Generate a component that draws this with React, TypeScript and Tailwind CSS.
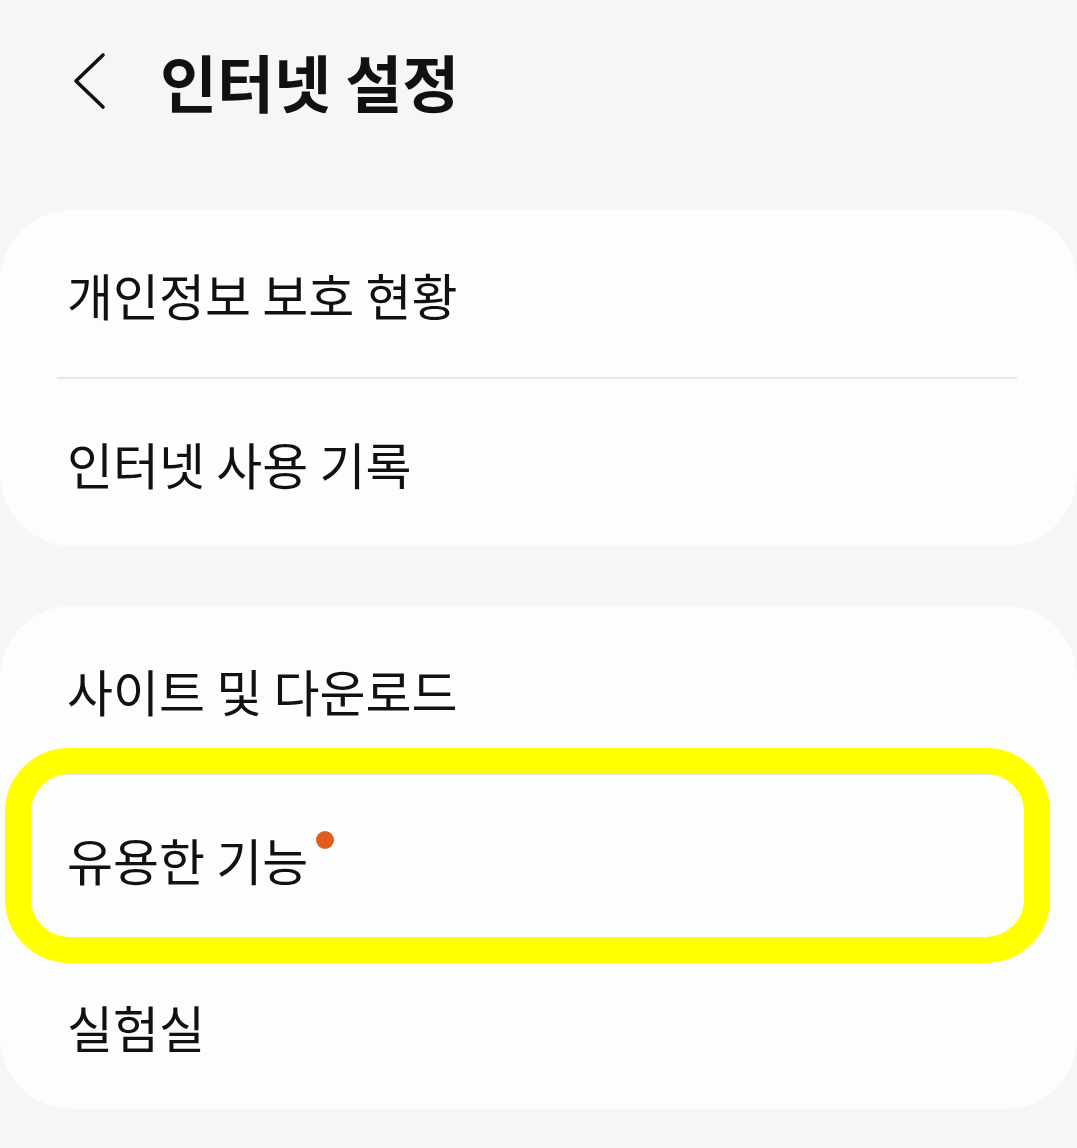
const font = { fontFamily: '"Noto Sans CJK KR", "Noto Sans", sans-serif' };

function Row({ label, dot, highlight }: { label: string; dot?: boolean; highlight?: boolean }) {
  return (
    <div className="relative flex h-[167px] items-center pl-[67px]">
      {highlight && (
        <div className="pointer-events-none absolute -top-[27px] -bottom-[21px] left-[5px] right-[27px] rounded-[64px] border-[26px] border-[#ffff00]" />
      )}
      <span className="relative text-[50px] leading-none text-[#111111]">
        {label}
        {dot && (
          <span className="absolute -right-[26px] -top-[3px] h-[18px] w-[18px] rounded-full bg-[#e25c1d]" />
        )}
      </span>
    </div>
  );
}

function Divider() {
  return <div className="ml-[57px] mr-[60px] h-[2px] bg-[#e6e6e8]" />;
}

export default function App() {
  return (
    <div className="min-h-[1148px] w-full bg-[#f6f6f8]" style={font}>
      <header className="flex h-[210px] items-start pt-[47px]">
        <div className="flex h-[68px] items-center">
          <svg className="ml-[72px] h-[60px] w-[34px]" viewBox="0 0 34 60" fill="none">
            <polyline
              points="31,4 4,30 31,56"
              stroke="#111111"
              strokeWidth="3.6"
              strokeLinecap="round"
              strokeLinejoin="round"
            />
          </svg>
          <h1 className="ml-[54px] text-[62px] font-bold leading-none text-[#111111]">
            인터넷 설정
          </h1>
        </div>
      </header>

      <section className="rounded-[72px] bg-[#fdfdfd]">
        <Row label="개인정보 보호 현황" />
        <Divider />
        <Row label="인터넷 사용 기록" />
      </section>

      <section className="mt-[60px] rounded-[72px] bg-[#fdfdfd]">
        <Row label="사이트 및 다운로드" />
        <Divider />
        <Row label="유용한 기능" dot highlight />
        <Row label="실험실" />
      </section>
    </div>
  );
}
